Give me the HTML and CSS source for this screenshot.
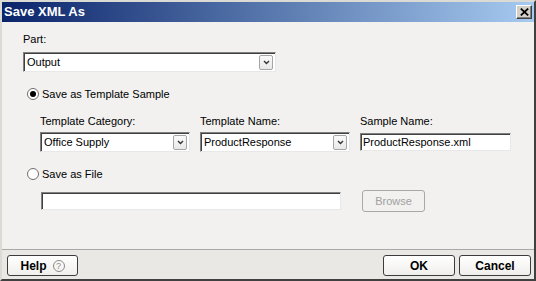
FILE: index.html
```html
<!DOCTYPE html>
<html>
<head>
<meta charset="utf-8">
<link rel="stylesheet" href="styles.css">
</head>
<body>
<div class="dialog">
  <div class="titlebar">
    <span class="title">Save XML As</span>
    <span class="close"><svg width="9" height="8" viewBox="0 0 9 8"><path d="M0.8 0.6L8.2 7.4M8.2 0.6L0.8 7.4" stroke="#000" stroke-width="1.8" fill="none"/></svg></span>
  </div>
  <div class="content">
    <div class="label">Part:</div>
    <div class="select part-select"><span class="value">Output</span><span class="drop"><svg width="7" height="5" viewBox="0 0 7 5"><path d="M1 1L3.5 3.5L6 1" stroke="#333" stroke-width="1.4" fill="none"/></svg></span></div>
    <div class="radio-row first"><span class="radio checked"></span><span>Save as Template Sample</span></div>
    <div class="grid">
      <div class="label">Template Category:</div>
      <div class="label">Template Name:</div>
      <div class="label">Sample Name:</div>
      <div class="select col-select"><span class="value">Office Supply</span><span class="drop"><svg width="7" height="5" viewBox="0 0 7 5"><path d="M1 1L3.5 3.5L6 1" stroke="#333" stroke-width="1.4" fill="none"/></svg></span></div>
      <div class="select col-select"><span class="value">ProductResponse</span><span class="drop"><svg width="7" height="5" viewBox="0 0 7 5"><path d="M1 1L3.5 3.5L6 1" stroke="#333" stroke-width="1.4" fill="none"/></svg></span></div>
      <div class="textbox sample"><span class="value">ProductResponse.xml</span></div>
    </div>
    <div class="radio-row second"><span class="radio"></span><span>Save as File</span></div>
    <div class="file-row">
      <div class="textbox file"></div>
      <div class="btn browse">Browse</div>
    </div>
  </div>
  <div class="footer">
    <div class="btn main help"><span>Help</span><span class="qicon">?</span></div>
    <div class="right">
      <div class="btn main">OK</div>
      <div class="btn main">Cancel</div>
    </div>
  </div>
</div>
</body>
</html>
```

FILE: styles.css
```css
* { box-sizing: border-box; margin: 0; padding: 0; }
html, body { width: 536px; height: 281px; overflow: hidden; }
body { font-family: "Liberation Sans", Arial, sans-serif; font-size: 11px; color: #000; background: #fff; }

.dialog {
  width: 536px; height: 281px;
  display: flex; flex-direction: column;
  background: #f2f1ef;
  border-style: solid; border-width: 2px 2px 2px 2px;
  border-color: #dcdad5 #404040 #404040 #dcdad5;
}

.titlebar {
  height: 20px; flex: none;
  display: flex; align-items: center; justify-content: space-between;
  padding: 0 2px 0 2px;
  background: linear-gradient(to right, #0a246a, #a6caf0);
}
.title { color: #fff; font-weight: bold; font-size: 13px; line-height: 16px; }
.close {
  width: 16px; height: 14px;
  display: flex; align-items: center; justify-content: center;
  background: #d4d0c8;
  border: 1px solid; border-color: #fff #404040 #404040 #fff;
  box-shadow: inset -1px -1px #808080;
}

.content { flex: 1; padding: 11px 0 0 21px; }
.label { line-height: 13px; height: 13px; }

.select, .textbox {
  display: flex; align-items: center;
  background: #fff;
  border: 1px solid; border-color: #808080 #e8e8e8 #e8e8e8 #808080;
  box-shadow: inset 1px 1px #404040;
}
.select { height: 20px; justify-content: space-between; padding: 0 2px 0 2px; }
.value { line-height: 13px; padding-left: 1px; }
.part-select { width: 253px; margin-top: 6px; }
.drop {
  width: 14px; height: 15px;
  display: flex; align-items: center; justify-content: center;
  border: 1px solid #a5a5a5; border-radius: 2px;
  background: linear-gradient(#fafafa, #e8e8e8);
}

.radio-row { display: flex; align-items: center; height: 14px; margin-left: 4px; line-height: 13px; }
.radio-row.first { margin-top: 15px; }
.radio-row.second { margin-top: 15px; }
.radio {
  width: 12px; height: 12px; border-radius: 50%;
  border: 1px solid #6f6f6f; background: #fff;
  margin-right: 3px;
  display: flex; align-items: center; justify-content: center;
}
.radio.checked::after { content: ""; width: 6px; height: 6px; border-radius: 50%; background: #000; }

.grid {
  display: grid; grid-template-columns: 160px 160px 160px;
  row-gap: 4px; margin: 14px 0 0 17px;
}
.col-select { width: 150px; }
.textbox.sample { width: 151px; height: 18px; margin-top: 1px; padding-left: 1px; }

.file-row { display: flex; align-items: center; margin: 9px 0 0 18px; height: 22px; }
.textbox.file { width: 300px; height: 18px; }

.btn {
  display: flex; align-items: center; justify-content: center;
  border-radius: 3px;
}
.browse {
  width: 63px; height: 22px; margin-left: 21px;
  border: 1px solid #a8a8a8; color: #a0a0a0;
  background: #f2f1ef;
}

.footer {
  flex: none; height: 30px;
  border-top: 1px solid #a8a8a8;
  background: #eae8e4;
  display: flex; justify-content: space-between; align-items: flex-start;
  padding: 5px 3px 0 5px;
}
.right { display: flex; gap: 4px; }
.main {
  width: 72px; height: 21px;
  border: 1px solid #3c3c3c;
  background: linear-gradient(#ffffff, #f0efec);
  font-weight: bold; font-size: 12px;
}
.help { width: 71px; gap: 6px; }
.qicon {
  width: 12px; height: 12px; border-radius: 50%;
  border: 1px solid #8a8a8a; color: #8a8a8a;
  font-size: 9px; font-weight: normal; line-height: 10px; text-align: center;
}
```
